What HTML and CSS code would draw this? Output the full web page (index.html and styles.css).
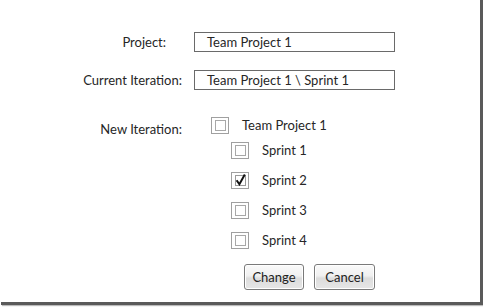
FILE: index.html
```html
<!DOCTYPE html>
<html>
<head>
<meta charset="utf-8">
<link rel="stylesheet" href="styles.css">
</head>
<body>
<div class="frame">
  <div class="form">
    <div class="label label-project">Project:</div>
    <div class="field">Team Project 1</div>

    <div class="label">Current Iteration:</div>
    <div class="field field-last">Team Project 1 \ Sprint 1</div>

    <div class="label label-tree">New Iteration:</div>
    <div class="tree">
      <div class="item root">
        <span class="cb"><span class="cb-inner"></span></span>
        <span class="text">Team Project 1</span>
      </div>
      <div class="children">
        <div class="item">
          <span class="cb"><span class="cb-inner"></span></span>
          <span class="text">Sprint 1</span>
        </div>
        <div class="item">
          <span class="cb"><span class="cb-inner checked"><svg viewBox="0 0 11 12" width="11" height="12"><path d="M1.6 6.2 L4.4 10.2 L9.8 0.6" fill="none" stroke="#111" stroke-width="2" stroke-linejoin="miter"/></svg></span></span>
          <span class="text">Sprint 2</span>
        </div>
        <div class="item">
          <span class="cb"><span class="cb-inner"></span></span>
          <span class="text">Sprint 3</span>
        </div>
        <div class="item">
          <span class="cb"><span class="cb-inner"></span></span>
          <span class="text">Sprint 4</span>
        </div>
      </div>
      <div class="buttons">
        <button class="btn btn-change">Change</button>
        <button class="btn btn-cancel">Cancel</button>
      </div>
    </div>
  </div>
</div>
</body>
</html>
```

FILE: styles.css
```css
html, body {
  margin: 0;
  padding: 0;
  background: #fff;
}

body {
  width: 483px;
  height: 307px;
  overflow: hidden;
  font-family: Lato, "Open Sans", "Liberation Sans", sans-serif;
  font-size: 13px;
  color: #262626;
}

.frame {
  box-sizing: border-box;
  width: 482px;
  height: 305px;
  margin-left: 1px;
  border-right: 3px solid #5a5a5a;
  border-bottom: 3px solid #5a5a5a;
  box-shadow: 1px 1px 1px #bbb;
}

.form {
  display: grid;
  grid-template-columns: 182px 1fr;
  column-gap: 12px;
  align-items: start;
  padding-top: 32px;
  margin-left: -1px;
}

.label {
  text-align: right;
  line-height: 20px;
  white-space: nowrap;
}

.label-project {
  padding-right: 16px;
}

.label-tree {
  line-height: 17px;
  padding-top: 4px;
}

.field {
  box-sizing: border-box;
  width: 201px;
  height: 20px;
  border: 1px solid #6a6a6a;
  padding-left: 12px;
  line-height: 18px;
  margin-bottom: 18px;
  white-space: nowrap;
}

.field-last {
  margin-bottom: 27px;
}

.tree {
  display: flex;
  flex-direction: column;
}

.item {
  display: flex;
  align-items: center;
  height: 17px;
}

.root {
  margin-left: 17px;
}

.children {
  display: flex;
  flex-direction: column;
  gap: 13px;
  margin-top: 8px;
  margin-left: 37px;
}

.cb {
  box-sizing: border-box;
  width: 18px;
  height: 17px;
  border: 1px solid #a0a0a0;
  display: flex;
  align-items: center;
  justify-content: center;
  background: #fff;
  flex: none;
}

.cb-inner {
  box-sizing: border-box;
  width: 11px;
  height: 11px;
  border: 1px solid #a8a8a8;
  display: flex;
  align-items: center;
  justify-content: center;
}

.cb-inner.checked {
  border-color: #9a9a9a;
}

.cb-inner svg {
  display: block;
  margin-top: -2px;
  flex: none;
}

.text {
  margin-left: 13px;
  line-height: 17px;
  white-space: nowrap;
}

.buttons {
  display: flex;
  gap: 10px;
  margin-top: 15px;
  margin-left: 50px;
}

.btn {
  box-sizing: border-box;
  height: 26px;
  padding: 0;
  border: 1px solid #7a7a7a;
  border-radius: 3px;
  background: linear-gradient(#fafafa 0%, #f0f0f0 45%, #dcdcdc 55%, #e6e6e6 100%);
  box-shadow: inset 0 0 0 1px #fff;
  font-family: Lato, "Open Sans", "Liberation Sans", sans-serif;
  font-size: 13px;
  color: #222;
}

.btn-change {
  width: 60px;
}

.btn-cancel {
  width: 61px;
}
```
